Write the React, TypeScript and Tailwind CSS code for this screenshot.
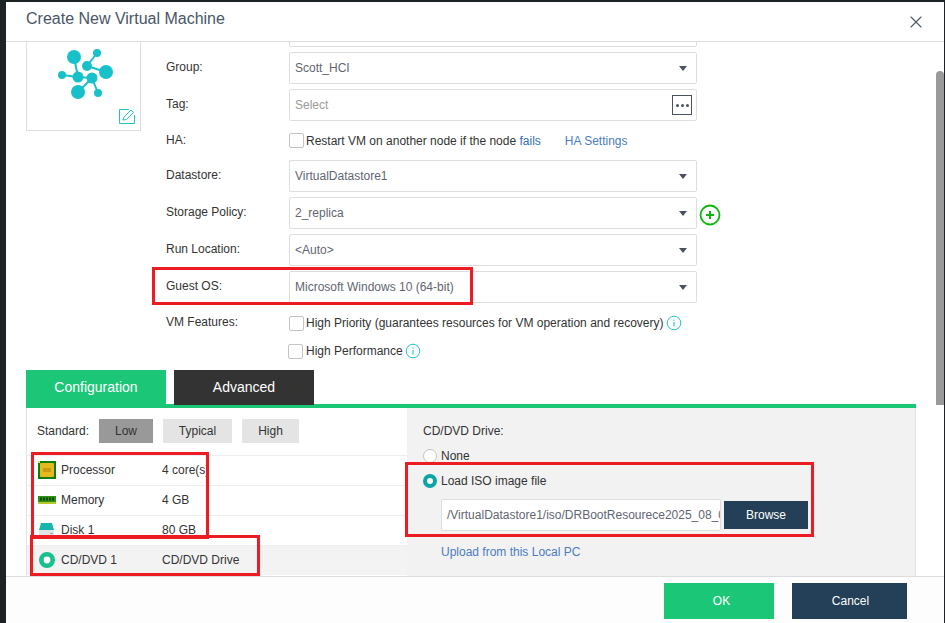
import { X } from "lucide-react";

const labelCls = "w-[123px] shrink-0 pb-[2px] text-[12px] text-[#333]";
const fieldCls = "flex h-[32px] w-[408px] items-center justify-between rounded-[2px] border border-[#dedede] bg-white pl-[5px] pr-[9px] text-[12px] text-[#5f6672]";

function Caret() {
  return <span className="h-0 w-0 border-x-[4px] border-t-[5px] border-x-transparent border-t-[#4a5160]" />;
}

function SelectRow({ label, value }: { label: string; value: string }) {
  return (
    <div className="flex items-center">
      <div className={labelCls}>{label}</div>
      <div className={fieldCls}>
        <span>{value}</span>
        <Caret />
      </div>
    </div>
  );
}

function Check() {
  return <span className="inline-block h-[15px] w-[15px] shrink-0 rounded-[2px] border border-[#c4c4c4] bg-white" />;
}

function Info() {
  return (
    <svg width="16" height="16" viewBox="0 0 16 16" className="shrink-0">
      <circle cx="8" cy="8" r="6.8" fill="none" stroke="#22c3cc" strokeWidth="1" />
      <path d="M8 4.5v1.2M8 7v4.5" stroke="#22c3cc" strokeWidth="1.1" />
    </svg>
  );
}

function Molecule() {
  return (
    <svg width="60" height="56" viewBox="56 46 60 56">
      <g stroke="#18c1c9" strokeWidth="2" fill="none">
        <path d="M74 57l4 20M97 53l-10 13M87 66l19 6M62 75l16 2M92 78l-14 14M92 78l6 15M78 77l14 1" />
      </g>
      <g fill="#18c1c9">
        <circle cx="74" cy="57" r="7" />
        <circle cx="97" cy="53" r="4" />
        <circle cx="87" cy="66" r="5" />
        <circle cx="106" cy="72" r="7" />
        <circle cx="62" cy="75" r="4" />
        <circle cx="78" cy="77" r="5.5" />
        <circle cx="92" cy="78" r="5.5" />
        <circle cx="78" cy="92" r="7" />
        <circle cx="98" cy="93" r="4" />
      </g>
    </svg>
  );
}

function ProcessorIcon() {
  return (
    <svg width="18" height="18" viewBox="0 0 18 18">
      <rect width="18" height="18" fill="#0e7d0e" />
      <rect x="2" y="2" width="14" height="14" rx="1" fill="#e5b81e" />
      <rect x="5" y="7" width="8" height="4" fill="#c99a12" />
      <rect width="2" height="2" fill="#e8e23c" />
    </svg>
  );
}

function MemoryIcon() {
  return (
    <svg width="18" height="18" viewBox="0 0 18 18">
      <rect y="5" width="18" height="6" fill="#2f8f14" />
      <rect y="11" width="18" height="2" fill="#b7c92a" />
      <path d="M2 6.5h2v3H2zM5 6.5h2v3H5zM8 6.5h2v3H8zM11 6.5h2v3h-2zM14 6.5h2v3h-2z" fill="#0c4f10" />
    </svg>
  );
}

function DiskIcon() {
  return (
    <svg width="18" height="18" viewBox="0 0 18 18">
      <path d="M3 2h11l2 7H1z" fill="#17b5ae" />
      <rect x="1" y="9" width="15" height="7" fill="#dfe5e5" />
      <rect x="12" y="12" width="3" height="1" fill="#9aa5a5" />
    </svg>
  );
}

function CdIcon() {
  return (
    <svg width="18" height="18" viewBox="0 0 18 18">
      <circle cx="9" cy="9" r="5.7" fill="#fff" stroke="#17c08c" strokeWidth="4.6" />
    </svg>
  );
}

function HwRow({ icon, name, value, active }: { icon: React.ReactNode; name: string; value: string; active?: boolean }) {
  return (
    <div className={`flex h-[30px] items-center border-t border-[#eeeeee] pb-[2px] pl-[11px] text-[12px] text-[#333] ${active ? "bg-[#f3f3f3]" : ""}`}>
      <span className="flex w-[23px] shrink-0 items-center">{icon}</span>
      <span className="w-[101px] shrink-0">{name}</span>
      <span>{value}</span>
    </div>
  );
}

export default function App() {
  return (
    <div className="h-[623px] w-[945px] overflow-hidden bg-[#1d2225] pl-[6px] pr-[1px] pt-[2px] font-['Liberation_Sans',Arial,sans-serif]">
      <div className="relative flex h-[621px] flex-col bg-white">
        <div className="flex h-[40px] shrink-0 items-center justify-between border-b border-[#dcdcdc] pl-[20px] pr-[18px]">
          <span className="mb-[5px] text-[16px] text-[#4a5568]">Create New Virtual Machine</span>
          <X size={20} strokeWidth={1.3} className="text-[#4a5568]" />
        </div>

        <div className="flex-1 overflow-hidden pl-[20px]">
          <div className="-mt-[27px] flex">
            <div className="relative flex h-[116px] w-[115px] shrink-0 justify-center border border-[#dedede] pl-[5px] pt-[30px]">
              <Molecule />
              <svg width="17" height="15" viewBox="0 0 17 15" className="absolute bottom-[6px] right-[4px]">
                <path d="M10 .5H.5v14h15V6" fill="none" stroke="#22c3cc" />
                <path d="M4 11l1-3 7-7 2.5 2.5-7 7z" fill="none" stroke="#22c3cc" />
              </svg>
            </div>
            <div className="ml-[25px] flex flex-col gap-[5px]">
              <div className="ml-[123px] h-[32px] w-[408px] rounded-[2px] border border-[#dedede]" />
              <SelectRow label="Group:" value="Scott_HCI" />
              <div className="flex items-center">
                <div className={labelCls}>Tag:</div>
                <div className={fieldCls.replace("pr-[9px]", "pr-[4px]")}>
                  <span className="text-[#9a9a9a]">Select</span>
                  <span className="flex h-[20px] w-[20px] items-center justify-center gap-[2px] border border-[#4a5160]">
                    <i className="h-[3px] w-[3px] rounded-full bg-[#4a5160]" />
                    <i className="h-[3px] w-[3px] rounded-full bg-[#4a5160]" />
                    <i className="h-[3px] w-[3px] rounded-full bg-[#4a5160]" />
                  </span>
                </div>
              </div>
              <div className="flex h-[29px] items-center">
                <div className={labelCls}>HA:</div>
                <Check />
                <span className="ml-[2px] text-[12px] text-[#333]">
                  Restart VM on another node if the node <span className="text-[#2f6fb5]">fails</span>
                </span>
                <span className="ml-[24px] text-[12px] text-[#4d7cc2]">HA Settings</span>
              </div>
              <SelectRow label="Datastore:" value="VirtualDatastore1" />
              <div className="relative">
                <SelectRow label="Storage Policy:" value="2_replica" />
                <svg width="22" height="22" viewBox="0 0 22 22" className="absolute left-[533px] top-[7px]">
                  <circle cx="11" cy="11" r="9.5" fill="none" stroke="#0ab80a" strokeWidth="1.8" />
                  <path d="M11 7v8M7 11h8" stroke="#0ab80a" strokeWidth="2" />
                </svg>
              </div>
              <SelectRow label="Run Location:" value="<Auto>" />
              <SelectRow label="Guest OS:" value="Microsoft Windows 10 (64-bit)" />
              <div className="mt-[4px] flex h-[22px] items-center">
                <div className={labelCls}>VM Features:</div>
                <Check />
                <span className="ml-[2px] text-[12px] text-[#333]">High Priority (guarantees resources for VM operation and recovery)</span>
                <span className="ml-[2px]"><Info /></span>
              </div>
              <div className="mt-[1px] flex h-[22px] items-center pl-[122px]">
                <Check />
                <span className="ml-[3px] text-[12px] text-[#333]">High Performance</span>
                <span className="ml-[2px]"><Info /></span>
              </div>
            </div>
          </div>

          <div className="mt-[8px] w-[890px]">
            <div className="flex gap-[8px] border-b-[4px] border-[#1cc677]">
              <div className="flex h-[34px] w-[140px] items-center justify-center bg-[#1cc677] text-[14px] text-white">Configuration</div>
              <div className="-mb-[1px] flex h-[35px] w-[140px] items-center justify-center bg-[#333333] text-[14px] text-white">Advanced</div>
            </div>
            <div className="flex h-[168px] border-x border-[#e2e2e2]">
              <div className="w-[380px] shrink-0 bg-white">
                <div className="flex h-[47px] items-center pb-[2px] pl-[10px] text-[12px] text-[#333]">
                  <span className="w-[62px]">Standard:</span>
                  <span className="flex h-[24px] w-[54px] items-center justify-center bg-[#999999]">Low</span>
                  <span className="ml-[10px] flex h-[24px] w-[69px] items-center justify-center bg-[#e4e4e4]">Typical</span>
                  <span className="ml-[10px] flex h-[24px] w-[57px] items-center justify-center bg-[#e4e4e4]">High</span>
                </div>
                <HwRow icon={<ProcessorIcon />} name="Processor" value="4 core(s)" />
                <HwRow icon={<MemoryIcon />} name="Memory" value="4 GB" />
                <HwRow icon={<DiskIcon />} name="Disk 1" value="80 GB" />
                <HwRow icon={<CdIcon />} name="CD/DVD 1" value="CD/DVD Drive" active />
              </div>
              <div className="flex-1 bg-[#f2f2f2] pl-[16px] pt-[14px] text-[12px] text-[#333]">
                <div>CD/DVD Drive:</div>
                <div className="mt-[9px] flex h-[14px] items-center">
                  <span className="h-[14px] w-[14px] rounded-full border border-[#c4c4c4] bg-white" />
                  <span className="ml-[4px]">None</span>
                </div>
                <div className="mt-[11px] flex h-[14px] items-center">
                  <span className="h-[14px] w-[14px] rounded-full border-[4px] border-[#0ba5a5] bg-white" />
                  <span className="ml-[4px]">Load ISO image file</span>
                </div>
                <div className="ml-[18px] mt-[11px] flex items-center gap-[3px]">
                  <div className="flex h-[32px] w-[280px] items-center overflow-hidden whitespace-nowrap rounded-[2px] border border-[#dedede] bg-white pl-[5px] text-[#5f6672]">
                    /VirtualDatastore1/iso/DRBootResourece2025_08_08.iso
                  </div>
                  <button className="h-[28px] w-[84px] bg-[#234058] text-[12px] text-white">Browse</button>
                </div>
                <div className="ml-[18px] mt-[12px] text-[#4d7cc2]">Upload from this Local PC</div>
              </div>
            </div>
          </div>
        </div>

        <div className="flex h-[47px] shrink-0 items-start justify-end gap-[18px] border-t border-[#dcdcdc] bg-[#fdfdfd] pr-[37px] pt-[6px]">
          <button className="h-[36px] w-[110px] bg-[#1cc677] pl-[5px] text-[12px] text-white">OK</button>
          <button className="h-[36px] w-[115px] bg-[#234058] pl-[2px] text-[12px] text-white">Cancel</button>
        </div>

        <div className="absolute left-[930px] top-[69px] h-[334px] w-[8px] rounded-t-[4px] bg-[#9a9a9a]" />

        <div className="pointer-events-none absolute left-[146px] top-[265px] h-[38px] w-[321px] border-[3px] border-[#ed1c24]" />
        <div className="pointer-events-none absolute left-[25px] top-[450px] h-[87px] w-[178px] border-[3px] border-[#ed1c24]" />
        <div className="pointer-events-none absolute left-[24px] top-[533px] h-[41px] w-[230px] border-[3px] border-[#ed1c24]" />
        <div className="pointer-events-none absolute left-[399px] top-[460px] h-[75px] w-[409px] border-[3px] border-[#ed1c24]" />
      </div>
    </div>
  );
}
